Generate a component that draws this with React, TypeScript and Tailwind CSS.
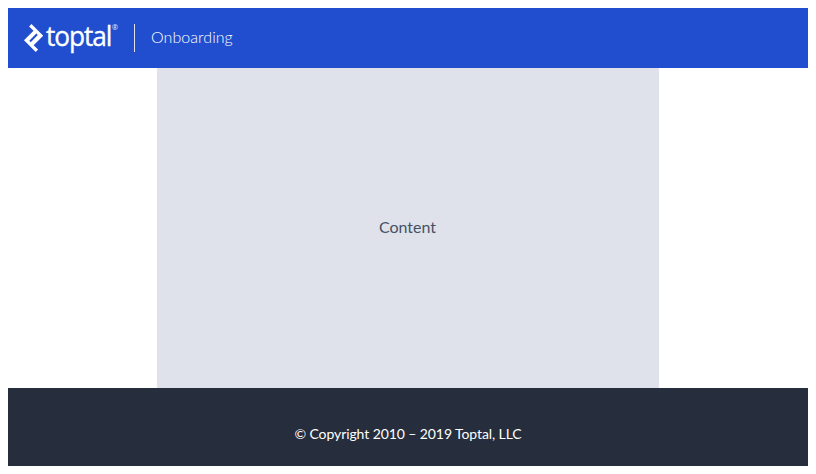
import { SiToptal } from 'react-icons/si';

function Logo() {
  return (
    <div className="flex h-7 w-[94px] shrink-0 text-white">
      <svg viewBox="0 0 94 28" className="h-7 w-[94px] overflow-visible" fill="currentColor" role="img">
        <SiToptal x={-4.4} y={0} size={28} />
        <text
          transform="translate(22 22) scale(0.955 1)"
          stroke="currentColor"
          strokeWidth="0.35"
          className="font-['Open_Sans',sans-serif] text-[27.5px] tracking-[-1.15px]"
        >
          toptal
        </text>
        <text x="87.8" y="6.4" opacity="0.9" className="font-['Open_Sans',sans-serif] text-[7.5px]">®</text>
      </svg>
    </div>
  );
}

function Header() {
  return (
    <header className="flex h-[60px] items-center bg-[#204ecf] px-4">
      <Logo />
      <div className="ml-4 h-7 w-px bg-[#dfe2ea]" />
      <span className="ml-4 pb-0.5 font-['Lato',sans-serif] text-[16px] leading-6 font-light tracking-[0.05px] text-white">
        Onboarding
      </span>
    </header>
  );
}

export default function App() {
  return (
    <div className="bg-white p-2 font-['Lato',sans-serif]">
      <Header />
      <main className="ml-[149px] flex h-80 w-[502px] items-center justify-center bg-[#dfe2ea] pr-px pb-0.5 text-[16px] leading-6 text-[#455065]">
        Content
      </main>
      <footer className="flex h-[78px] items-center justify-center bg-[#262d3d] pt-[13px] text-[14px] leading-5 tracking-[-0.09px] text-white">
        © Copyright 2010 – 2019 Toptal, LLC
      </footer>
    </div>
  );
}
